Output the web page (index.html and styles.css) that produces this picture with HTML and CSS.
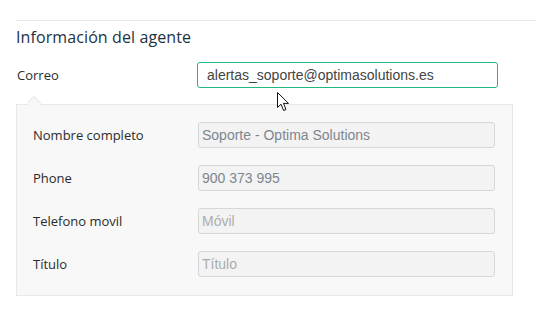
FILE: index.html
```html
<!DOCTYPE html>
<html lang="es">
<head>
    <meta charset="UTF-8">
    <title>Información del agente</title>
    <link rel="stylesheet" href="styles.css">
</head>
<body>
    <div class="page">
        <h2 class="section-title">Información del agente</h2>

        <div class="row row-main">
            <label class="lbl" for="correo">Correo</label>
            <input class="field field-active" id="correo" type="text" value="alertas_soporte@optimasolutions.es">
        </div>

        <div class="panel">
            <div class="row">
                <label class="lbl">Nombre completo</label>
                <input class="field" type="text" value="Soporte - Optima Solutions" disabled>
            </div>
            <div class="row">
                <label class="lbl">Phone</label>
                <input class="field" type="text" value="900 373 995" disabled>
            </div>
            <div class="row">
                <label class="lbl">Telefono movil</label>
                <input class="field" type="text" placeholder="Móvil" disabled>
            </div>
            <div class="row">
                <label class="lbl">Título</label>
                <input class="field" type="text" placeholder="Título" disabled>
            </div>
        </div>
    </div>

    <!-- mouse pointer captured in the screenshot -->
    <svg class="pointer" width="13" height="20" viewBox="0 0 13 20">
        <path d="M0.5 0.5 L0.5 15.5 L4 12.2 L6.6 18.5 L9 17.5 L6.5 11.4 L11.5 11.4 Z" fill="#fff" stroke="#111" stroke-width="1" stroke-linejoin="miter"/>
    </svg>
</body>
</html>
```

FILE: styles.css
```css
body {
    margin: 0;
    padding: 0;
    background: #fff;
    font-family: 'Open Sans', 'Noto Sans', sans-serif;
    color: #333;
}
.page {
    margin-left: 16px;
    padding-top: 20px;
    position: relative;
}
.page::before {
    content: '';
    display: block;
    height: 1px;
    background: #e8e9ea;
}
.section-title {
    width: 497px;
    margin: 5px 0 0;
    font-size: 16px;
    font-weight: 400;
    line-height: 22px;
    letter-spacing: 0.1px;
    color: #1d3144;
}
.row {
    display: grid;
    grid-template-columns: 165px 297px;
    align-items: center;
    height: 26px;
}
.row + .row {
    margin-top: 17px;
}
.row-main {
    grid-template-columns: 180px 301px;
    margin-top: 14px;
    padding-left: 1px;
}
.lbl {
    font-size: 13px;
    color: #2b2b2b;
}
.field {
    box-sizing: border-box;
    height: 26px;
    width: 100%;
    margin: 0;
    padding: 0 8px 0 3px;
    border: 1px solid #d3d9da;
    border-radius: 3px;
    background: #f3f3f3;
    font-family: 'Liberation Sans', Arial, sans-serif;
    font-size: 14px;
    color: #7d868f;
    outline: none;
}
.field::placeholder {
    color: #adadad;
}
.field-active {
    background: #fff;
    border-color: #20b87c;
    color: #444;
    padding-left: 9px;
}
.panel {
    position: relative;
    box-sizing: border-box;
    width: 497px;
    margin-top: 16px;
    padding: 17px 16px 18px;
    background: #f8f8f8;
    border: 1px solid #e6e8e9;
}
.panel::before {
    content: '';
    position: absolute;
    top: -7px;
    left: 12px;
    width: 9px;
    height: 9px;
    background: #f8f8f8;
    border-top: 1px solid #e6e8e9;
    border-left: 1px solid #e6e8e9;
    transform: rotate(45deg);
}
.pointer {
    position: absolute;
    left: 277px;
    top: 92px;
}
```
